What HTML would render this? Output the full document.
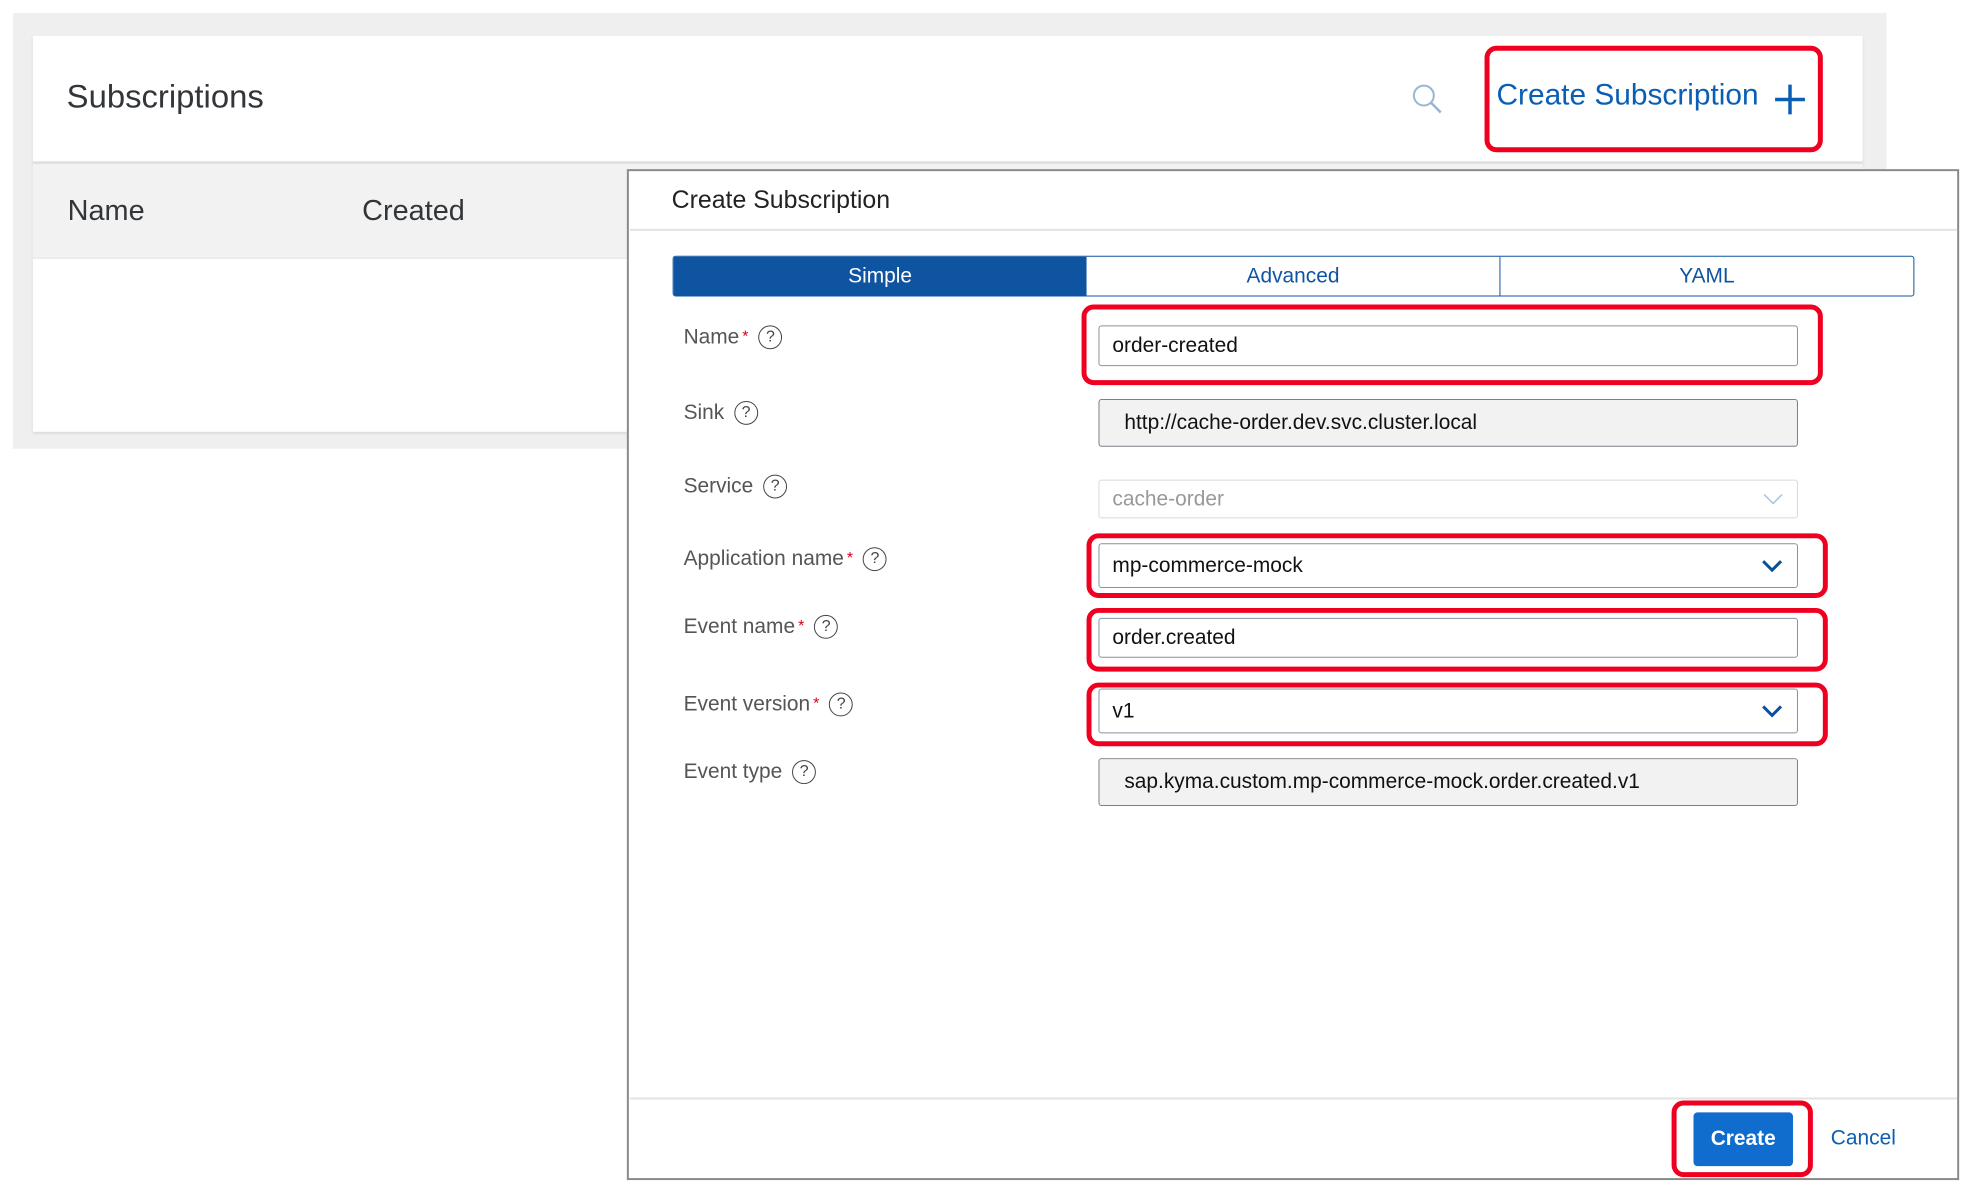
<!DOCTYPE html>
<html><head><meta charset="utf-8"><style>
*{box-sizing:border-box;margin:0;padding:0}
body{width:1978px;height:1192px;background:#fff;position:relative;overflow:hidden;font-family:"Liberation Sans",Arial,sans-serif;color:#32363a}
#w{position:absolute;left:0;top:0;width:1978px;height:1192px;transform:scale(0.995);transform-origin:0 0}
.a{position:absolute}
.lbl{position:absolute;left:687px;font-size:21px;color:#555;line-height:24px;white-space:nowrap}
.lbl .s{color:#d0021b;font-size:16px;margin-left:3px;vertical-align:top}
.q{display:inline-block;width:24px;height:24px;border:1.6px solid #444;border-radius:50%;font-size:16px;text-align:center;line-height:21px;margin-left:10px;color:#444;vertical-align:middle}
.inp{position:absolute;left:1104px;width:703px;border:1px solid #89919a;border-radius:3px;font-size:21px;padding-left:13px;display:flex;align-items:center;background:#fff;color:#111}
.ro{background:#f2f2f2;border:1.5px solid #7a7f85;padding-left:25px}
.red{position:absolute;border:5px solid #f00020;border-radius:12px}
.chev{position:absolute;right:14px;top:50%}
</style></head><body><div id="w">
<div class="a" style="left:13px;top:13px;width:1883px;height:438px;background:#efefef"></div>
<div class="a" style="left:33px;top:36px;width:1839px;height:398px;background:#fff;box-shadow:0 1px 3px rgba(0,0,0,.12)"></div>
<div class="a" style="left:33px;top:162px;width:1839px;height:3px;background:#e0e0e0"></div>
<div class="a" style="left:33px;top:165px;width:1839px;height:95px;background:#f2f2f2;border-bottom:1px solid #e3e3e3"></div>
<div class="a" style="left:67px;top:78px;font-size:33px;color:#32363a">Subscriptions</div>
<div class="a" style="left:68px;top:196px;font-size:29px;color:#32363a">Name</div>
<div class="a" style="left:364px;top:196px;font-size:29px;color:#32363a">Created</div>
<svg class="a" style="left:1418px;top:83px" width="34" height="34" viewBox="0 0 34 34"><circle cx="13" cy="13" r="10" fill="none" stroke="#9bb4d2" stroke-width="2"/><line x1="20" y1="20" x2="30" y2="30" stroke="#9bb4d2" stroke-width="2.5"/></svg>
<div class="a" style="left:1504px;top:79px;font-size:30px;color:#0a5fb4">Create Subscription</div>
<svg class="a" style="left:1783px;top:84px" width="32" height="32"><path d="M16 1V31M1 16H31" stroke="#0a5fb4" stroke-width="3.5"/></svg>
<div class="red" style="left:1492px;top:46px;width:340px;height:107px"></div>

<div class="a" style="left:630px;top:170px;width:1339px;height:1016px;background:#fff;border:2.5px solid #8a8a8a"></div>
<div class="a" style="left:675px;top:187px;font-size:25px;color:#222">Create Subscription</div>
<div class="a" style="left:633px;top:230px;width:1334px;height:2px;background:#e2e2e2"></div>
<div class="a" style="left:676px;top:257px;width:1248px;height:41px;border:1.5px solid #0f54a0;border-radius:3px;display:flex;font-size:21px;overflow:hidden">
<div style="width:415px;background:#0f54a0;color:#fff;display:flex;align-items:center;justify-content:center">Simple</div>
<div style="width:416px;color:#0f54a0;display:flex;align-items:center;justify-content:center;border-right:1.5px solid #0f54a0">Advanced</div>
<div style="flex:1;color:#0f54a0;display:flex;align-items:center;justify-content:center">YAML</div></div>

<div class="lbl" style="top:327px">Name<span class="s">*</span><span class="q">?</span></div>
<div class="inp" style="top:327px;height:41px">order-created</div>
<div class="red" style="left:1087px;top:306px;width:745px;height:81px"></div>

<div class="lbl" style="top:403px">Sink<span class="q">?</span></div>
<div class="inp ro" style="top:401px;height:48px">http://cache-order.dev.svc.cluster.local</div>

<div class="lbl" style="top:477px">Service<span class="q">?</span></div>
<div class="inp" style="top:482px;height:39px;border-color:#d5dadf;color:#999">cache-order<svg class="chev" style="margin-top:-6px" width="20" height="12"><path d="M1 1L10 10L19 1" fill="none" stroke="#a9c0dc" stroke-width="1.5"/></svg></div>

<div class="lbl" style="top:550px">Application name<span class="s">*</span><span class="q">?</span></div>
<div class="inp" style="top:546px;height:45px">mp-commerce-mock<svg class="chev" style="margin-top:-7px" width="22" height="14"><path d="M2 2L11 11L20 2" fill="none" stroke="#0a4f9c" stroke-width="3"/></svg></div>
<div class="red" style="left:1092px;top:536px;width:745px;height:65px"></div>

<div class="lbl" style="top:618px">Event name<span class="s">*</span><span class="q">?</span></div>
<div class="inp" style="top:621px;height:40px">order.created</div>
<div class="red" style="left:1092px;top:611px;width:745px;height:64px"></div>

<div class="lbl" style="top:696px">Event version<span class="s">*</span><span class="q">?</span></div>
<div class="inp" style="top:692px;height:45px">v1<svg class="chev" style="margin-top:-7px" width="22" height="14"><path d="M2 2L11 11L20 2" fill="none" stroke="#0a4f9c" stroke-width="3"/></svg></div>
<div class="red" style="left:1092px;top:686px;width:745px;height:64px"></div>

<div class="lbl" style="top:764px">Event type<span class="q">?</span></div>
<div class="inp ro" style="top:762px;height:48px">sap.kyma.custom.mp-commerce-mock.order.created.v1</div>

<div class="a" style="left:633px;top:1103px;width:1334px;height:2px;background:#e2e2e2"></div>
<div class="a" style="left:1702px;top:1118px;width:100px;height:54px;background:#106ccd;border-radius:4px;color:#fff;font-weight:bold;font-size:21px;display:flex;align-items:center;justify-content:center">Create</div>
<div class="red" style="left:1680px;top:1106px;width:142px;height:77px"></div>
<div class="a" style="left:1840px;top:1132px;font-size:21px;color:#0a5fb4">Cancel</div>
</div></body></html>
